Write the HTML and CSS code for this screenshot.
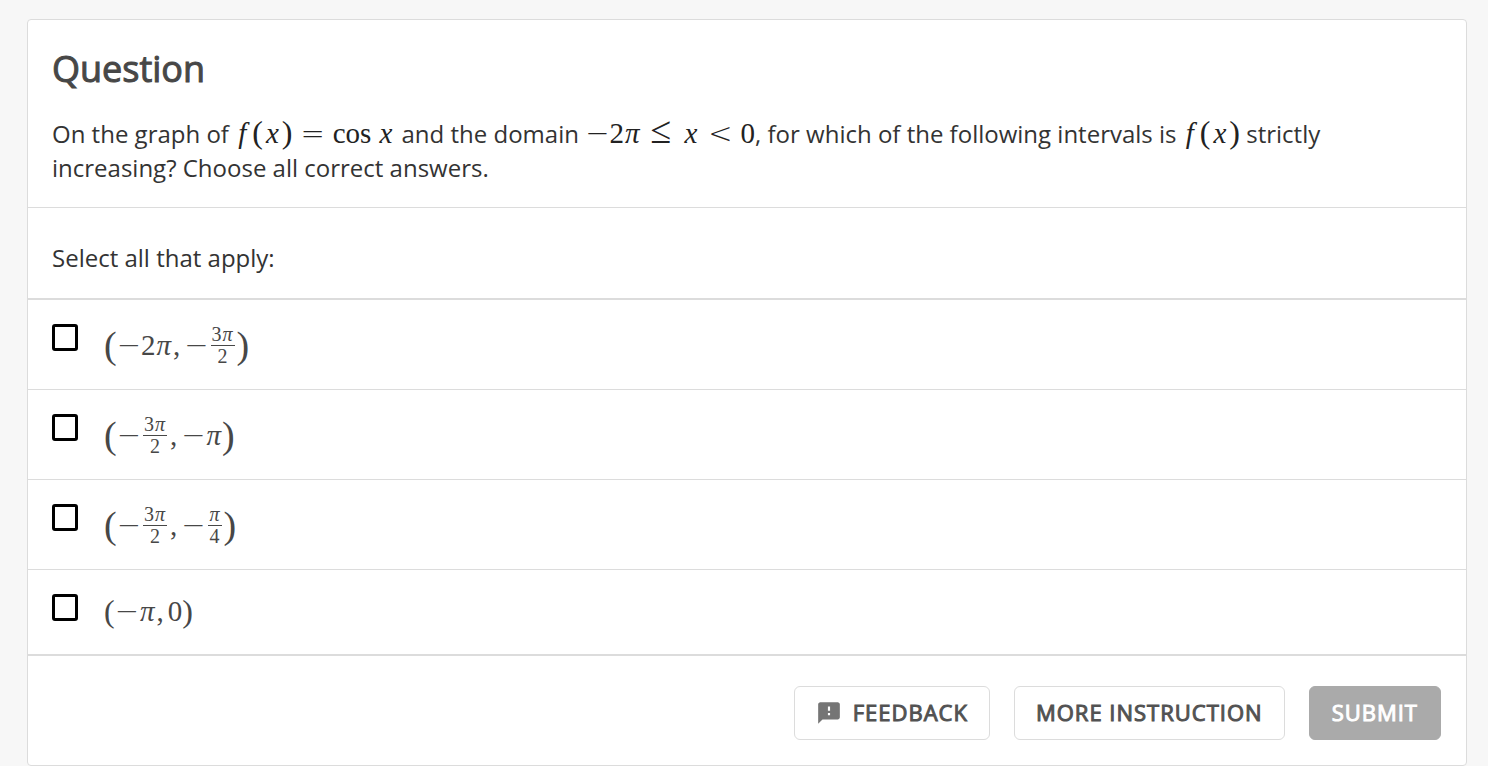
FILE: index.html
```html
<!DOCTYPE html>
<html lang="en">
<head>
  <meta charset="UTF-8">
  <meta name="viewport" content="width=device-width, initial-scale=1.0">
  <title>Question</title>
  <link rel="stylesheet" href="styles.css">
</head>
<body>
  <main class="card">
    <section class="question">
      <h1>Question</h1>
      <p>On the graph of <span class="math"><i class="func">f</i><span class="paren">(</span><i class="var">x</i><span class="paren">)</span><span class="rel">=</span>cos<i class="var arg">x</i></span> and the domain <span class="math"><span class="minus">−</span>2<i>π</i><span class="rel leq">≤</span><i class="var">x</i><span class="rel">&lt;</span>0</span>, for which of the following intervals is <span class="math"><i class="func">f</i><span class="paren">(</span><i class="var">x</i><span class="paren">)</span></span> strictly increasing? Choose all correct answers.</p>
    </section>

    <form>
      <p class="prompt">Select all that apply:</p>

      <!-- Answers -->
      <div class="option">
        <input type="checkbox" id="answer-1">
        <label for="answer-1" class="math"><span class="paren big">(</span><span class="minus">−</span>2<i>π</i><span class="comma">,</span><span class="minus">−</span><span class="frac"><span class="num">3<i>π</i></span><span>2</span></span><span class="paren big">)</span></label>
      </div>
      <div class="option">
        <input type="checkbox" id="answer-2">
        <label for="answer-2" class="math"><span class="paren big">(</span><span class="minus">−</span><span class="frac"><span class="num">3<i>π</i></span><span>2</span></span><span class="comma">,</span><span class="minus">−</span><i>π</i><span class="paren big">)</span></label>
      </div>
      <div class="option">
        <input type="checkbox" id="answer-3">
        <label for="answer-3" class="math"><span class="paren big">(</span><span class="minus">−</span><span class="frac"><span class="num">3<i>π</i></span><span>2</span></span><span class="comma">,</span><span class="minus">−</span><span class="frac"><span class="num"><i>π</i></span><span>4</span></span><span class="paren big">)</span></label>
      </div>
      <div class="option last">
        <input type="checkbox" id="answer-4">
        <label for="answer-4" class="math"><span class="paren">(</span><span class="minus">−</span><i>π</i><span class="comma">,</span>0<span class="paren">)</span></label>
      </div>

      <div class="actions">
        <button type="button" class="btn">
          <svg class="icon" viewBox="0 0 24 24" aria-hidden="true"><path d="M20 2H4c-1.1 0-2 .9-2 2v18l4-4h14c1.1 0 2-.9 2-2V4c0-1.1-.9-2-2-2zm-7 12h-2v-2h2v2zm0-4h-2V6h2v4z"/></svg>
          FEEDBACK
        </button>
        <button type="button" class="btn">MORE INSTRUCTION</button>
        <button type="submit" class="btn submit" disabled>SUBMIT</button>
      </div>
    </form>
  </main>
</body>
</html>
```
FILE: styles.css
```css
* {
  box-sizing: border-box;
}
body {
  margin: 0;
  padding: 19px 21px 0 27px;
  background-color: #f7f7f7;
  color: #333;
  font-family: "Open Sans", sans-serif;
  font-size: 24px;
  line-height: 34px;
}
.card {
  background-color: #fff;
  border: 1px solid #dcdcdc;
  border-radius: 4px;
}
.question {
  padding: 23px 24px 22px;
  border-bottom: 1px solid #dcdcdc;
}
h1 {
  margin: 0 0 21px;
  color: #474747;
  font-size: 36px;
  font-weight: 400;
  line-height: 52px;
  -webkit-text-stroke: 1px #474747;
}
p {
  margin: 0;
}
.prompt {
  padding: 33px 24px 23px;
  border-bottom: 2px solid #dcdcdc;
}

/* Math */
.math {
  color: #222;
  font-family: "Liberation Serif", serif;
  font-size: 29px;
  line-height: 34px;
  white-space: nowrap;
}
.math i {
  padding: 0 1px;
}
.math .func {
  padding: 0 6px 0 3px;
}
.math .var {
  padding: 0 3px;
}
.math .arg {
  padding-left: 8px;
}
.paren {
  font-size: 32px;
  line-height: 30px;
}
.paren.big {
  font-size: 38px;
}
.minus,
.rel {
  font-family: "DejaVu Sans", sans-serif;
  font-weight: 200;
}
.rel {
  padding: 0 8px;
}
.leq {
  padding: 0 10px;
  font-family: "Liberation Serif", serif;
  font-size: 38px;
  font-weight: 400;
  line-height: 20px;
}
.comma {
  padding: 0 4px 0 1px;
}
.frac {
  display: inline-flex;
  flex-direction: column;
  vertical-align: middle;
  margin: 0 2px;
  font-size: 20px;
  line-height: 21px;
  text-align: center;
}
.frac .num {
  padding: 0 1px;
  border-bottom: 1px solid #474747;
}

.option {
  display: flex;
  align-items: flex-start;
  gap: 26px;
  height: 90px;
  padding: 24px;
  border-bottom: 1px solid #dcdcdc;
}
.option.last {
  height: 86px;
  border-bottom-width: 2px;
}
.option input {
  appearance: none;
  flex: none;
  width: 26px;
  height: 27px;
  margin: 0;
  border: 3px solid #000;
  border-radius: 3px;
}
.option input:checked {
  background-color: #000;
}
.option label {
  display: flex;
  align-items: center;
  height: 42px;
  color: #474747;
}
.option.last label {
  height: 34px;
}

.actions {
  display: flex;
  justify-content: flex-end;
  gap: 24px;
  padding: 30px 25px 25px;
}
.btn {
  display: flex;
  align-items: center;
  height: 54px;
  padding: 0 21px 2px;
  background-color: #fff;
  border: 1px solid #dcdcdc;
  border-radius: 6px;
  color: #525252;
  font-family: inherit;
  font-size: 22px;
  letter-spacing: 1px;
  -webkit-text-stroke: 1px currentColor;
}
.btn.submit {
  padding: 0 22px 2px;
  background-color: #aaa;
  border-color: #aaa;
  color: #fff;
}
.icon {
  width: 26px;
  height: 26px;
  margin: 2px 11px 0 0;
  fill: #757575;
  stroke: none;
}
```
